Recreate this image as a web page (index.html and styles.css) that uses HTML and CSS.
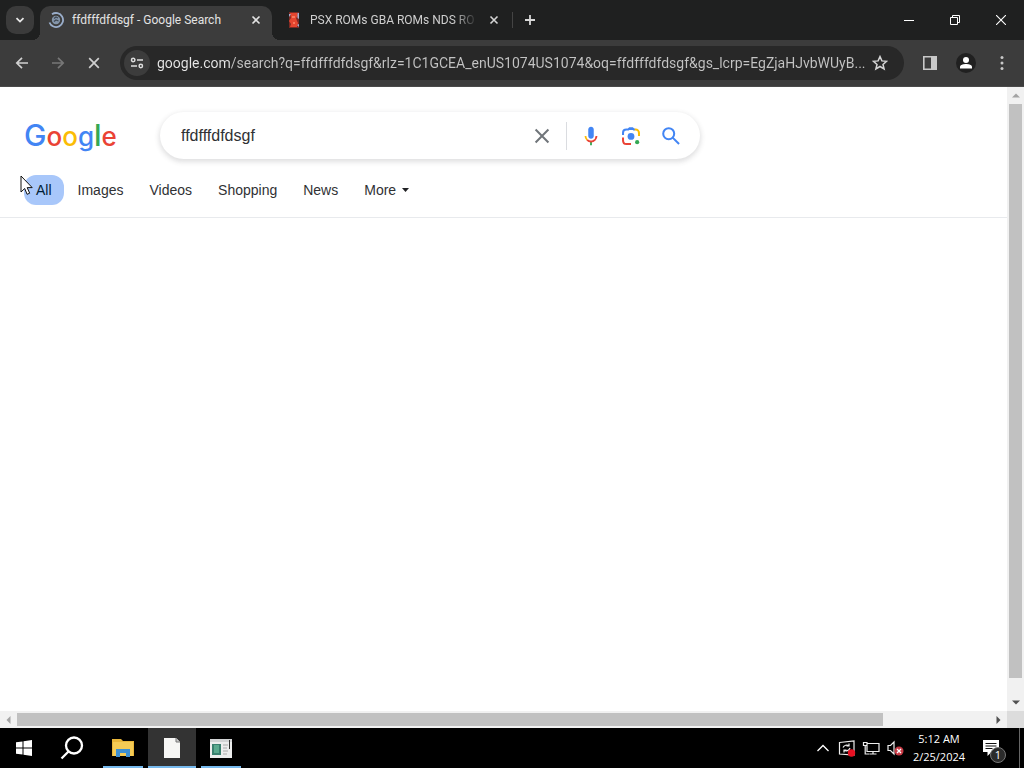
FILE: index.html
```html
<!DOCTYPE html>
<html lang="en">
<head>
  <meta charset="UTF-8" />
  <meta name="viewport" content="width=device-width, initial-scale=1.0"/>
  <title>ffdfffdfdsgf - Google Search</title>
  <link rel="stylesheet" href="styles.css">
</head>
<body>
  <header class="tab-strip">
    <button class="tab-search" aria-label="Search tabs">
      <svg width="12" height="12" viewBox="0 0 12 12"><path d="M2.500 4.200 6 7.600l3.500-3.400" fill="none" stroke="#e8e8e8" stroke-width="1.800"/></svg>
    </button>
    <div class="tab active">
      <svg width="16" height="16" viewBox="0 0 16 16">
        <circle cx="8" cy="8" r="4.200" fill="#8495aa"/>
        <path d="M6 6.500 8 5l2 1M6 9.500l2-1.500 2.500 1" fill="none" stroke="#3f4853" stroke-width="1.300"/>
        <path d="M4 2.300a7 7 0 1 1-2.500 8.200" fill="none" stroke="#9aaecb" stroke-width="1.800"/>
      </svg>
      <span class="tab-title">ffdfffdfdsgf - Google Search</span>
      <button class="tab-close" aria-label="Close tab">
        <svg width="10" height="10" viewBox="0 0 10 10"><path d="M1.500 1.500l7 7M8.500 1.500l-7 7" stroke="#e3e3e3" stroke-width="1.600"/></svg>
      </button>
    </div>
    <div class="tab">
      <svg width="16" height="16" viewBox="0 0 16 16">
        <path d="M3 0h10v16H3z" fill="#7c2a24"/>
        <path d="M4 1h7l1 3-2 2 1 3 1 2-1 4H4l1-3-2-3 2-3z" fill="#e5452f"/>
        <path d="M3 2h2L3 5zM11.500 1H13v6l-1.500-1zM11 13l2-1v3z" fill="#a6aed0"/>
        <path d="M6 4h3v2H6zM7 10h2v2H7z" fill="#f7785c"/>
      </svg>
      <span class="tab-title fade">PSX ROMs GBA ROMs NDS RO</span>
      <button class="tab-close" aria-label="Close tab">
        <svg width="10" height="10" viewBox="0 0 10 10"><path d="M1.500 1.500l7 7M8.500 1.500l-7 7" stroke="#d5d5d5" stroke-width="1.600"/></svg>
      </button>
    </div>
    <button class="new-tab" aria-label="New tab">
      <svg width="12" height="12" viewBox="0 0 12 12"><path d="M6 1v10M1 6h10" stroke="#d8d8d8" stroke-width="1.800"/></svg>
    </button>
    <div class="window-controls">
      <button aria-label="Minimize"><svg width="10" height="10" viewBox="0 0 10 10"><path d="M0 5.500h10" stroke="#fff"/></svg></button>
      <button aria-label="Restore"><svg width="10" height="10" viewBox="0 0 10 10"><path d="M.5 2.500h7v7h-7zM2.500 2.500v-2h7v7h-2" fill="none" stroke="#fff"/></svg></button>
      <button aria-label="Close"><svg width="10" height="10" viewBox="0 0 10 10"><path d="M0 0l10 10M10 0 0 10" stroke="#fff" stroke-width="1.100"/></svg></button>
    </div>
  </header>

  <nav class="toolbar">
    <button aria-label="Back"><svg width="16" height="16" viewBox="0 0 16 16"><path d="M14 8H3M8 2.800 2.800 8 8 13.200" fill="none" stroke="#d0d0d0" stroke-width="1.700"/></svg></button>
    <button aria-label="Forward"><svg width="16" height="16" viewBox="0 0 16 16"><path d="M2 8h11M8 2.800 13.200 8 8 13.200" fill="none" stroke="#777" stroke-width="1.700"/></svg></button>
    <button aria-label="Stop"><svg width="16" height="16" viewBox="0 0 16 16"><path d="M3.200 3.200l9.600 9.600M12.800 3.200l-9.600 9.600" stroke="#d0d0d0" stroke-width="1.700"/></svg></button>
    <div class="omnibox">
      <button class="site-info" aria-label="View site information">
        <svg width="14" height="14" viewBox="0 0 14 14"><g fill="none" stroke="#dedede" stroke-width="1.500"><circle cx="3.200" cy="4" r="1.700"/><path d="M7 4h6M1 10h6"/><circle cx="10.800" cy="10" r="1.700"/></g></svg>
      </button>
      <input type="text" class="url" aria-label="Address" value="google.com/search?q=ffdfffdfdsgf&amp;rlz=1C1GCEA_enUS1074US1074&amp;oq=ffdfffdfdsgf&amp;gs_lcrp=EgZjaHJvbWUyB..." />
      <button class="star" aria-label="Bookmark this tab">
        <svg width="16" height="16" viewBox="0 0 16 16"><path d="M8 1.600l1.900 4.300 4.700.4-3.600 3.100 1.100 4.600L8 11.500 3.900 14l1.100-4.600-3.600-3.100 4.700-.4z" fill="none" stroke="#d5d5d5" stroke-width="1.500"/></svg>
      </button>
    </div>
    <button aria-label="Side panel"><svg width="16" height="16" viewBox="0 0 16 16"><path d="M1.800 1.800h12.400v12.400H1.800z" fill="none" stroke="#c8c8c8" stroke-width="1.600"/><path d="M9 2h5v12H9z" fill="#c8c8c8"/></svg></button>
    <button aria-label="Profile"><svg width="20" height="20" viewBox="0 0 20 20"><circle cx="10" cy="10" r="10" fill="#202020"/><circle cx="10" cy="7" r="3" fill="#fff"/><path d="M4 15.500V14c0-2.200 3.500-3 6-3s6 .8 6 3v1.500z" fill="#fff"/></svg></button>
    <button aria-label="Menu"><svg width="16" height="16" viewBox="0 0 16 16"><g fill="#c8c8c8"><circle cx="8" cy="2.500" r="1.500"/><circle cx="8" cy="8" r="1.500"/><circle cx="8" cy="13.500" r="1.500"/></g></svg></button>
  </nav>

  <div class="viewport">
    <main class="page">
      <div class="search-row">
        <a href="#" class="logo" aria-label="Google"><span class="blue tall">G</span><span class="red">o</span><span class="yellow">o</span><span class="blue">g</span><span class="green tall">l</span><span class="red">e</span></a>
        <form class="search-box">
          <input type="text" aria-label="Search" value="ffdfffdfdsgf" />
          <button type="reset" class="clear" aria-label="Clear"><svg width="24" height="24" viewBox="0 0 24 24"><path d="M5 5l14 14M19 5 5 19" stroke="#70757a" stroke-width="2.200"/></svg></button>
          <button type="button" aria-label="Search by voice"><svg width="24" height="24" viewBox="0 0 24 24">
            <path d="M12 15c1.700 0 3-1.300 3-3V5c0-1.700-1.300-3-3-3S9 3.300 9 5v7c0 1.700 1.300 3 3 3z" fill="#4285f4"/>
            <path d="M11 18.100h2V22h-2z" fill="#34a853"/>
            <path d="M7.100 16.900A7 7 0 0 1 5 12h2c0 1.400.5 2.600 1.500 3.500z" fill="#fbbc04"/>
            <path d="M12 19c-1.900 0-3.600-.8-4.900-2.100l1.400-1.400A5 5 0 0 0 17 12h2a7 7 0 0 1-7 7z" fill="#ea4335"/>
          </svg></button>
          <button type="button" aria-label="Search by image"><svg width="24" height="24" viewBox="0 0 24 24">
            <circle cx="12" cy="12.500" r="3.700" fill="#4285f4"/>
            <circle cx="18.700" cy="18.700" r="2.300" fill="#34a853"/>
            <path d="M3.300 11V8.500C3.300 6 5 5 7 5H9l1.500-1.500h3L15 5h1.500" fill="none" stroke="#4285f4" stroke-width="2.200"/>
            <path d="M8 5.500l2.500-2h3l2.500 2z" fill="#4285f4"/>
            <path d="M16 5h1C19 5 20.700 6.500 20.700 8.500V12" fill="none" stroke="#fbbc04" stroke-width="2.200"/>
            <path d="M3.300 13.500v3C3.300 19 5 20.700 7 20.700H12" fill="none" stroke="#ea4335" stroke-width="2.200"/>
          </svg></button>
          <button type="submit" aria-label="Google Search"><svg width="24" height="24" viewBox="0 0 24 24"><g fill="none" stroke="#4285f4" stroke-width="2.200"><circle cx="9.500" cy="9.500" r="6"/><path d="M13.800 13.800l7 7"/></g></svg></button>
        </form>
      </div>
      <nav class="chips">
        <a href="#" class="selected">All</a>
        <a href="#">Images</a>
        <a href="#">Videos</a>
        <a href="#">Shopping</a>
        <a href="#">News</a>
        <a href="#">More<svg width="7" height="4" viewBox="0 0 7 4"><path d="M0 0h7L3.500 4z" fill="#202124"/></svg></a>
      </nav>
      <svg class="cursor" width="14" height="21" viewBox="0 0 14 21"><path d="M1 1v16l3.700-3.500 2.400 5.800 2.600-1.100-2.500-5.600h5z" fill="#fff" stroke="#111"/></svg>
    </main>
    <div class="scroll-v">
      <svg width="8" height="5" viewBox="0 0 8 5"><path d="M0 4.500h8L4 .5z" fill="#a3a3a3"/></svg>
      <div class="thumb"></div>
      <svg width="8" height="5" viewBox="0 0 8 5"><path d="M0 .5h8L4 4.500z" fill="#505050"/></svg>
    </div>
    <div class="scroll-h">
      <svg width="5" height="8" viewBox="0 0 5 8"><path d="M4.500 0v8L.5 4z" fill="#a3a3a3"/></svg>
      <div class="thumb"></div>
      <svg width="5" height="8" viewBox="0 0 5 8"><path d="M.5 0v8l4-4z" fill="#505050"/></svg>
    </div>
    <div class="scroll-corner"></div>
  </div>

  <footer class="taskbar">
    <button aria-label="Start"><svg width="16" height="16" viewBox="0 0 16 16"><path d="M0 2.300 6.500 1.400v6.100H0zM7.500 1.200 16 0v7.500H7.500zM0 8.500h6.500v6.100L0 13.700zM7.500 8.500H16V16l-8.500-1.200z" fill="#fff"/></svg></button>
    <button aria-label="Search"><svg width="24" height="24" viewBox="0 0 24 24"><g fill="none" stroke="#fff" stroke-width="2.300"><circle cx="14" cy="9.500" r="8"/><path d="M8.500 15.500 1.500 22.500"/></g></svg></button>
    <button class="app" aria-label="File Explorer"><svg width="22" height="20" viewBox="0 0 22 20">
      <path d="M0 1h9l2 2h11v15H0z" fill="#e9b63a"/><path d="M1 4h20v14H1z" fill="#f5cb55"/>
      <path d="M4 19v-8h14v8h-4v-4H8v4z" fill="#3d8fd1"/>
    </svg></button>
    <button class="app current" aria-label="Document"><svg width="16" height="20" viewBox="0 0 16 20"><path d="M0 0h12l4 4v16H0z" fill="#f7f7f5"/><path d="M12 0v4h4" fill="#ccc" stroke="#777"/></svg></button>
    <button class="app" aria-label="Application"><svg width="22" height="19" viewBox="0 0 22 19">
      <path d="M0 0h22v19H0z" fill="#eceded"/><path d="M0 0h22v3H0z" fill="#d2d4d5"/>
      <path d="M2 5h9v11H2z" fill="#39806f"/><path d="M4 6h5v8H4z" fill="#59a98e"/>
      <path d="M13 6h5M13 9h4M13 12h5M13 15h4" stroke="#aaa"/><path d="M19.500 1v9" stroke="#333"/>
    </svg></button>
    <div class="tray">
      <button aria-label="Show hidden icons"><svg width="14" height="14" viewBox="0 0 14 14"><path d="M1.500 10 7 4.500l5.500 5.500" fill="none" stroke="#fff" stroke-width="1.300"/></svg></button>
      <button aria-label="Update"><svg width="18" height="18" viewBox="0 0 18 18"><path d="M1.500 3.500 16 2v14l-14.500-1z" fill="none" stroke="#eee" stroke-width="1.200"/><path d="M5 8.500C6 6 9 5.500 11 7M11 4.500V7H8.500M12 9c-1 3-4 3.500-6 2M6 13.500V11h2.500" fill="none" stroke="#eee" stroke-width="1.200"/><circle cx="13.500" cy="14" r="3.700" fill="#e81123"/></svg></button>
      <button aria-label="Network"><svg width="18" height="16" viewBox="0 0 18 16"><g fill="none" stroke="#eee" stroke-width="1.200"><path d="M5 3.500h12v8H5zM7.500 14h7M11 11.500V14M1.500 2.500H5v3H1.500zM3.200 5.500V14h4"/></g></svg></button>
      <button aria-label="Volume muted"><svg width="18" height="16" viewBox="0 0 18 16"><path d="M2 5.500h2.500L8 2v12l-3.500-3.500H2z" fill="none" stroke="#eee" stroke-width="1.200"/><circle cx="13" cy="11" r="4.500" fill="#c73a45"/><path d="M11 9l4 4M15 9l-4 4" stroke="#fff" stroke-width="1.300"/></svg></button>
      <div class="clock"><span>5:12 AM</span><span>2/25/2024</span></div>
      <button class="notifications" aria-label="Notifications">
        <svg width="18" height="18" viewBox="0 0 18 18"><path d="M1 1h16v12H9.500l-4 4v-4H1z" fill="#fff"/><path d="M3.500 4.500h11M3.500 7h11M3.500 9.500h7" stroke="#111"/></svg>
        <span class="badge">1</span>
      </button>
    </div>
  </footer>
</body>
</html>
```

FILE: styles.css
```css
body {
  margin: 0;
  height: 100vh;
  display: flex;
  flex-direction: column;
  font-family: "Open Sans", "Noto Sans", sans-serif;
  background: #fff;
  overflow: hidden;
}
button {
  display: flex;
  align-items: center;
  justify-content: center;
  flex: none;
  padding: 0;
  border: none;
  background: none;
  color: inherit;
  font: inherit;
}
input {
  min-width: 0;
  padding: 0;
  border: none;
  outline: none;
  background: none;
}
svg {
  flex: none;
}

/* Tabs */
.tab-strip {
  display: flex;
  align-items: center;
  height: 40px;
  flex: none;
  padding-left: 6px;
  background: #1f2020;
  color: #e3e3e3;
}
.tab-search {
  width: 28px;
  height: 28px;
  margin-right: 6px;
  border-radius: 10px;
  background: #3b3b3b;
}
.tab {
  display: flex;
  align-items: center;
  box-sizing: border-box;
  width: 232px;
  height: 34px;
  margin-top: 6px;
  padding: 0 8px 6px;
  font-family: Roboto, "Open Sans", sans-serif;
  font-size: 12px;
  color: #cfcfcf;
}
.tab.active {
  position: relative;
  border-radius: 10px 10px 0 0;
  background: #3c3c3c;
  color: #e3e3e3;
}
.tab.active::before,
.tab.active::after {
  content: "";
  position: absolute;
  bottom: 0;
  width: 8px;
  height: 8px;
}
.tab.active::before {
  right: 100%;
  background: radial-gradient(circle at 0 0, transparent 8px, #3c3c3c 8px);
}
.tab.active::after {
  left: 100%;
  background: radial-gradient(circle at 100% 0, transparent 8px, #3c3c3c 8px);
}
.tab + .tab {
  width: 240px;
  padding-left: 14px;
  padding-right: 10px;
}
.tab-title {
  flex: 1;
  min-width: 0;
  margin-left: 8px;
  overflow: hidden;
  white-space: nowrap;
}
.fade {
  -webkit-mask-image: linear-gradient(to right, #000 85%, transparent);
  mask-image: linear-gradient(to right, #000 85%, transparent);
}
.tab-close {
  width: 16px;
  height: 16px;
  margin-left: 8px;
}
.new-tab {
  width: 34px;
  height: 16px;
  border-left: 1px solid #444;
}
.window-controls {
  display: flex;
  margin-left: auto;
}
.window-controls button {
  width: 46px;
  height: 40px;
}

/* Toolbar */
.toolbar {
  display: flex;
  align-items: center;
  gap: 8px;
  height: 46px;
  flex: none;
  padding: 0 8px;
  background: #3c3c3c;
  border-bottom: 1px solid #4a4a4a;
}
.toolbar > button {
  width: 28px;
  height: 28px;
}
.omnibox {
  display: flex;
  align-items: center;
  flex: 1;
  min-width: 0;
  height: 34px;
  margin: 0 4px;
  padding: 0 10px 0 4px;
  border-radius: 17px;
  background: #282828;
}
.site-info {
  width: 26px;
  height: 26px;
  border-radius: 50%;
  background: #3c3c3c;
}
.url {
  flex: 1;
  margin-left: 7px;
  font-family: Roboto, "Open Sans", sans-serif;
  font-size: 14px;
  color: transparent;
  background: linear-gradient(to right, #e8e8e8 73px, #c4c4c4 73px);
  -webkit-background-clip: text;
  background-clip: text;
}
.star {
  width: 28px;
  height: 28px;
}

/* Page and scrollbars */
.viewport {
  flex: 1;
  min-height: 0;
  display: grid;
  grid-template-columns: minmax(0, 1fr) 17px;
  grid-template-rows: minmax(0, 1fr) 17px;
}
.page {
  position: relative;
  overflow: hidden;
  padding-top: 25px;
  font-family: "Liberation Sans", Arial, sans-serif;
}
.search-row {
  display: flex;
  align-items: center;
  padding-left: 24px;
}
.logo {
  width: 136px;
  font-family: Inter, sans-serif;
  font-size: 26px;
  font-weight: 500;
  line-height: 36px;
  text-decoration: none;
}
.logo .tall {
  font-size: 30px;
}
.blue { color: #4285f4; }
.red { color: #ea4335; }
.yellow { color: #fbbc05; }
.green { color: #34a853; }
.search-box {
  display: flex;
  align-items: center;
  box-sizing: border-box;
  width: 540px;
  height: 47px;
  padding: 0 9px 0 21px;
  border-radius: 24px;
  box-shadow: 0 2px 5px 1px rgba(64, 60, 67, 0.16);
}
.search-box input {
  flex: 1;
  font-family: inherit;
  font-size: 16px;
  color: #303134;
}
.search-box button {
  width: 40px;
  height: 28px;
}
.search-box svg {
  width: 22px;
  height: 22px;
}
.search-box .clear {
  width: 49px;
  margin-right: 4px;
  border-right: 1px solid #dadce0;
}
.chips {
  display: flex;
  gap: 2px;
  padding: 16px 24px 12px;
  border-bottom: 1px solid #e8eaed;
}
.chips a {
  display: flex;
  align-items: center;
  gap: 6px;
  padding: 0 12px;
  border-radius: 12px;
  font-size: 14px;
  line-height: 30px;
  color: #303134;
  text-decoration: none;
}
.chips .selected {
  background: #a8c7fa;
  color: #001d35;
}
.cursor {
  position: absolute;
  left: 20px;
  top: 88px;
}
.scroll-v,
.scroll-h {
  display: flex;
  align-items: center;
  justify-content: space-between;
  background: #f1f1f1;
}
.scroll-v {
  flex-direction: column;
  gap: 6px;
  padding: 6px 0;
}
.scroll-h {
  gap: 6px;
  padding: 0 6px;
}
.scroll-v .thumb {
  width: 13px;
  flex: 1;
  margin-bottom: 16px;
  background: #c1c1c1;
}
.scroll-h .thumb {
  width: 87%;
  height: 13px;
  margin-right: auto;
  background: #c1c1c1;
}
.scroll-corner {
  background: #dcdcdc;
}

/* Taskbar */
.taskbar {
  display: flex;
  height: 40px;
  flex: none;
  background: #000;
  color: #fff;
}
.taskbar > button {
  width: 48px;
}
.taskbar .app {
  box-sizing: border-box;
  width: 40px;
  margin-left: 7px;
  padding-top: 2px;
  border-bottom: 2px solid #76b9ed;
}
.taskbar .current {
  width: 48px;
  margin: 0 5px;
  background: #333;
}
.taskbar .current + .app {
  margin-left: 0;
}
.tray {
  display: flex;
  margin-left: auto;
  margin-right: 4px;
  border-right: 1px solid #666;
}
.tray button {
  width: 24px;
}
.clock {
  display: flex;
  flex-direction: column;
  justify-content: center;
  align-items: center;
  width: 56px;
  margin-left: 4px;
  font-size: 11px;
  line-height: 18px;
}
.tray .notifications {
  position: relative;
  width: 56px;
  margin-left: -4px;
}
.badge {
  position: absolute;
  right: 13px;
  bottom: 5px;
  width: 14px;
  height: 14px;
  border: 1px solid #777;
  border-radius: 50%;
  background: #2b2b2b;
  font-size: 11px;
  line-height: 14px;
  text-align: center;
}
```
